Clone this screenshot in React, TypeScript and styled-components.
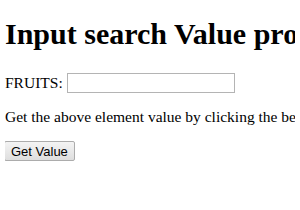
import styled, { createGlobalStyle } from "styled-components";

const GlobalStyle = createGlobalStyle`
  body {
    margin: 0 5px;
    background: #ffffff;
    color: #000000;
    font-family: "Liberation Serif", "Times New Roman", serif;
    font-size: 15.5px;
    overflow: hidden;
  }
`;

const Title = styled.h1`
  margin: 17px 0 22px;
  font-size: 30px;
  font-weight: bold;
  white-space: nowrap;
`;

const FieldRow = styled.div`
  display: flex;
  align-items: center;
  gap: 4px;
`;

const Label = styled.label`
  font-size: 15.5px;
`;

const SearchInput = styled.input`
  box-sizing: border-box;
  width: 168px;
  height: 20px;
  padding: 1px 3px;
  border: 1px solid #b4b4b4;
  font-family: "Liberation Sans", Arial, sans-serif;
  font-size: 13px;
`;

const Hint = styled.p`
  margin: 15px 0;
  white-space: nowrap;
`;

const Button = styled.button`
  box-sizing: border-box;
  height: 20px;
  margin-left: -1px;
  padding: 0 6px;
  font-family: "Liberation Sans", Arial, sans-serif;
  font-size: 13px;
  color: #000000;
  background: linear-gradient(#f4f4f4, #dedede);
  border: 1px solid #acacac;
  border-radius: 2px;
`;

export default function App() {
  return (
    <>
      <GlobalStyle />
      <Title>Input search Value property</Title>
      <FieldRow>
        <Label htmlFor="fruits">FRUITS:</Label>
        <SearchInput id="fruits" type="search" />
      </FieldRow>
      <Hint>Get the above element value by clicking the below button</Hint>
      <Button>Get Value</Button>
    </>
  );
}
